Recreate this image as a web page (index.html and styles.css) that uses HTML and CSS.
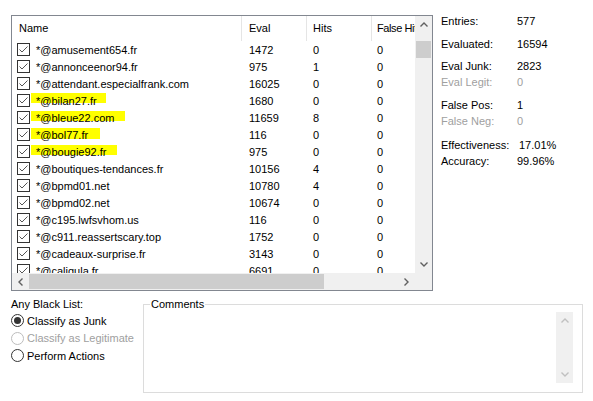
FILE: index.html
```html
<!DOCTYPE html>
<html>
<head>
<meta charset="utf-8">
<link rel="stylesheet" href="styles.css">
</head>
<body>
<div class="dialog">
  <div class="top">
    <div class="listview">
      <div class="lv-main">
        <div class="lv-content">
          <div class="lv-header">
            <div class="hcell c-name">Name</div>
            <div class="hcell c-eval">Eval</div>
            <div class="hcell c-hits">Hits</div>
            <div class="hcell c-false h-tight">False Hits</div>
          </div>
          <div class="lv-rows">
            <div class="row"><div class="cell c-name"><svg class="chk" viewBox="0 0 13 13"><rect x="0.5" y="0.5" width="12" height="12"/><polyline points="2.5,6.5 5,9 10.5,3.5"/></svg><span class="txt">*@amusement654.fr</span></div><div class="cell c-eval">1472</div><div class="cell c-hits">0</div><div class="cell c-false">0</div></div>
            <div class="row"><div class="cell c-name"><svg class="chk" viewBox="0 0 13 13"><rect x="0.5" y="0.5" width="12" height="12"/><polyline points="2.5,6.5 5,9 10.5,3.5"/></svg><span class="txt">*@annonceenor94.fr</span></div><div class="cell c-eval">975</div><div class="cell c-hits">1</div><div class="cell c-false">0</div></div>
            <div class="row"><div class="cell c-name"><svg class="chk" viewBox="0 0 13 13"><rect x="0.5" y="0.5" width="12" height="12"/><polyline points="2.5,6.5 5,9 10.5,3.5"/></svg><span class="txt">*@attendant.especialfrank.com</span></div><div class="cell c-eval">16025</div><div class="cell c-hits">0</div><div class="cell c-false">0</div></div>
            <div class="row"><span class="hl hl-1"></span><div class="cell c-name"><svg class="chk" viewBox="0 0 13 13"><rect x="0.5" y="0.5" width="12" height="12"/><polyline points="2.5,6.5 5,9 10.5,3.5"/></svg><span class="txt">*@bilan27.fr</span></div><div class="cell c-eval">1680</div><div class="cell c-hits">0</div><div class="cell c-false">0</div></div>
            <div class="row"><span class="hl hl-2"></span><div class="cell c-name"><svg class="chk" viewBox="0 0 13 13"><rect x="0.5" y="0.5" width="12" height="12"/><polyline points="2.5,6.5 5,9 10.5,3.5"/></svg><span class="txt">*@bleue22.com</span></div><div class="cell c-eval">11659</div><div class="cell c-hits">8</div><div class="cell c-false">0</div></div>
            <div class="row"><span class="hl hl-3"></span><div class="cell c-name"><svg class="chk" viewBox="0 0 13 13"><rect x="0.5" y="0.5" width="12" height="12"/><polyline points="2.5,6.5 5,9 10.5,3.5"/></svg><span class="txt">*@bol77.fr</span></div><div class="cell c-eval">116</div><div class="cell c-hits">0</div><div class="cell c-false">0</div></div>
            <div class="row"><span class="hl hl-4"></span><div class="cell c-name"><svg class="chk" viewBox="0 0 13 13"><rect x="0.5" y="0.5" width="12" height="12"/><polyline points="2.5,6.5 5,9 10.5,3.5"/></svg><span class="txt">*@bougie92.fr</span></div><div class="cell c-eval">975</div><div class="cell c-hits">0</div><div class="cell c-false">0</div></div>
            <div class="row"><div class="cell c-name"><svg class="chk" viewBox="0 0 13 13"><rect x="0.5" y="0.5" width="12" height="12"/><polyline points="2.5,6.5 5,9 10.5,3.5"/></svg><span class="txt">*@boutiques-tendances.fr</span></div><div class="cell c-eval">10156</div><div class="cell c-hits">4</div><div class="cell c-false">0</div></div>
            <div class="row"><div class="cell c-name"><svg class="chk" viewBox="0 0 13 13"><rect x="0.5" y="0.5" width="12" height="12"/><polyline points="2.5,6.5 5,9 10.5,3.5"/></svg><span class="txt">*@bpmd01.net</span></div><div class="cell c-eval">10780</div><div class="cell c-hits">4</div><div class="cell c-false">0</div></div>
            <div class="row"><div class="cell c-name"><svg class="chk" viewBox="0 0 13 13"><rect x="0.5" y="0.5" width="12" height="12"/><polyline points="2.5,6.5 5,9 10.5,3.5"/></svg><span class="txt">*@bpmd02.net</span></div><div class="cell c-eval">10674</div><div class="cell c-hits">0</div><div class="cell c-false">0</div></div>
            <div class="row"><div class="cell c-name"><svg class="chk" viewBox="0 0 13 13"><rect x="0.5" y="0.5" width="12" height="12"/><polyline points="2.5,6.5 5,9 10.5,3.5"/></svg><span class="txt">*@c195.lwfsvhom.us</span></div><div class="cell c-eval">116</div><div class="cell c-hits">0</div><div class="cell c-false">0</div></div>
            <div class="row"><div class="cell c-name"><svg class="chk" viewBox="0 0 13 13"><rect x="0.5" y="0.5" width="12" height="12"/><polyline points="2.5,6.5 5,9 10.5,3.5"/></svg><span class="txt">*@c911.reassertscary.top</span></div><div class="cell c-eval">1752</div><div class="cell c-hits">0</div><div class="cell c-false">0</div></div>
            <div class="row"><div class="cell c-name"><svg class="chk" viewBox="0 0 13 13"><rect x="0.5" y="0.5" width="12" height="12"/><polyline points="2.5,6.5 5,9 10.5,3.5"/></svg><span class="txt">*@cadeaux-surprise.fr</span></div><div class="cell c-eval">3143</div><div class="cell c-hits">0</div><div class="cell c-false">0</div></div>
            <div class="row"><div class="cell c-name"><svg class="chk" viewBox="0 0 13 13"><rect x="0.5" y="0.5" width="12" height="12"/><polyline points="2.5,6.5 5,9 10.5,3.5"/></svg><span class="txt">*@caligula.fr</span></div><div class="cell c-eval">6691</div><div class="cell c-hits">0</div><div class="cell c-false">0</div></div>
          </div>
        </div>
        <div class="vscroll">
          <div class="sbtn"><svg class="arr" viewBox="0 0 8 5"><polyline points="0.5,4.5 4,1 7.5,4.5"/></svg></div>
          <div class="vtrack"><div class="vthumb"></div></div>
          <div class="sbtn"><svg class="arr" viewBox="0 0 8 5"><polyline points="0.5,0.5 4,4 7.5,0.5"/></svg></div>
        </div>
      </div>
      <div class="hscroll">
        <div class="sbtn"><svg class="arr-h" viewBox="0 0 5 8"><polyline points="4.5,0.5 1,4 4.5,7.5"/></svg></div>
        <div class="htrack"><div class="hthumb"></div></div>
        <div class="sbtn"><svg class="arr-h" viewBox="0 0 5 8"><polyline points="0.5,0.5 4,4 0.5,7.5"/></svg></div>
        <div class="corner"></div>
      </div>
    </div>
    <div class="stats">
      <div class="sgroup">
        <div class="srow"><span class="slabel">Entries:</span><span class="sval">577</span></div>
      </div>
      <div class="sgroup">
        <div class="srow"><span class="slabel">Evaluated:</span><span class="sval">16594</span></div>
      </div>
      <div class="sgroup g-tight">
        <div class="srow"><span class="slabel">Eval Junk:</span><span class="sval">2823</span></div>
        <div class="srow dim"><span class="slabel">Eval Legit:</span><span class="sval">0</span></div>
      </div>
      <div class="sgroup">
        <div class="srow"><span class="slabel">False Pos:</span><span class="sval">1</span></div>
        <div class="srow dim"><span class="slabel">False Neg:</span><span class="sval">0</span></div>
      </div>
      <div class="sgroup g-wide">
        <div class="srow"><span class="slabel">Effectiveness:</span><span class="sval v-eff">17.01%</span></div>
        <div class="srow"><span class="slabel">Accuracy:</span><span class="sval">99.96%</span></div>
      </div>
    </div>
  </div>
  <div class="bottom">
    <div class="options">
      <div class="opt-title">Any Black List:</div>
      <label class="radio"><svg class="rad" viewBox="0 0 13 13"><circle cx="6.5" cy="6.5" r="6"/><circle class="dot" cx="6.5" cy="6.5" r="3.5"/></svg>Classify as Junk</label>
      <label class="radio disabled"><svg class="rad" viewBox="0 0 13 13"><circle cx="6.5" cy="6.5" r="6"/></svg>Classify as Legitimate</label>
      <label class="radio"><svg class="rad" viewBox="0 0 13 13"><circle cx="6.5" cy="6.5" r="6"/></svg>Perform Actions</label>
    </div>
    <fieldset class="comments">
      <legend>Comments</legend>
      <div class="comments-body">
        <div class="cscroll">
          <svg class="arr" viewBox="0 0 8 5"><polyline points="0.5,4.5 4,1 7.5,4.5"/></svg>
          <svg class="arr" viewBox="0 0 8 5"><polyline points="0.5,0.5 4,4 7.5,0.5"/></svg>
        </div>
      </div>
    </fieldset>
  </div>
</div>
</body>
</html>
```

FILE: styles.css
```css
* { box-sizing: border-box; }
html, body { margin: 0; padding: 0; background: #fff; }
body {
  width: 593px;
  height: 401px;
  overflow: hidden;
  font-family: "Liberation Sans", Arial, sans-serif;
  font-size: 11px;
  color: #000;
}
.dialog { padding: 15px 0 0 11px; }
.top { display: flex; align-items: flex-start; }

/* list view */
.listview {
  width: 422px;
  height: 276px;
  border: 1px solid #828790;
  display: flex;
  flex-direction: column;
  flex: none;
}
.lv-main { display: flex; height: 257px; flex: none; }
.lv-content { width: 403px; overflow: hidden; flex: none; }
.lv-header { display: flex; height: 25px; }
.hcell {
  flex: none;
  height: 25px;
  line-height: 25px;
  border-right: 1px solid #e5e5e5;
  white-space: nowrap;
  overflow: hidden;
}
.h-tight { letter-spacing: -0.4px; }
.c-name { width: 230px; padding-left: 7px; }
.c-eval { width: 65px; padding-left: 7px; }
.c-hits { width: 65px; padding-left: 6px; }
.c-false { width: 80px; padding-left: 5px; }
.row { display: flex; height: 17px; line-height: 18px; position: relative; }
.cell { flex: none; white-space: nowrap; position: relative; z-index: 1; }
.row .c-name { padding-left: 5px; display: flex; align-items: center; }
.chk { width: 13px; height: 13px; margin-right: 6px; flex: none; }
.chk rect { fill: #fff; stroke: #333; stroke-width: 1; }
.chk polyline { fill: none; stroke: #555; stroke-width: 1; }
.hl { position: absolute; background: #ffff00; z-index: 0; left: 19px; }
.hl-1 { top: 1px; height: 10px; width: 75px; }
.hl-2 { top: 2px; height: 10px; width: 94px; }
.hl-3 { top: 2px; height: 11px; width: 69px; }
.hl-4 { top: 2px; height: 10px; width: 86px; }

/* scrollbars */
.vscroll {
  width: 17px;
  background: #f0f0f0;
  display: flex;
  flex-direction: column;
  flex: none;
}
.sbtn { width: 17px; height: 17px; flex: none; display: flex; align-items: center; justify-content: center; }
.arr { width: 8px; height: 5px; }
.arr-h { width: 5px; height: 8px; }
.arr polyline, .arr-h polyline { fill: none; stroke: #606060; stroke-width: 1.4; }
.vtrack { flex: 1; padding: 8px 1px 0; }
.vthumb { height: 17px; background: #cdcdcd; }
.hscroll { height: 17px; display: flex; background: #f0f0f0; flex: none; }
.htrack { flex: 1; padding: 1px 0; }
.hthumb { width: 295px; height: 15px; background: #cdcdcd; }
.corner { width: 17px; flex: none; }

/* stats */
.stats { margin: -2px 0 0 8px; }
.sgroup { margin-top: 7px; }
.sgroup:first-child { margin-top: 0; }
.g-tight { margin-top: 6px; }
.g-wide { margin-top: 8px; }
.srow { display: flex; height: 16px; line-height: 16px; white-space: nowrap; }
.slabel { width: 76px; flex: none; }
.v-eff { margin-left: 2px; }
.dim { color: #a0a0a0; }

/* bottom */
.bottom { display: flex; margin-top: 5px; }
.options { width: 132px; flex: none; }
.opt-title { height: 16px; line-height: 16px; }
.radio { display: flex; align-items: center; height: 17.5px; white-space: nowrap; }
.rad { width: 13px; height: 13px; margin-right: 3px; flex: none; }
.rad circle { fill: #fff; stroke: #333; stroke-width: 1; }
.rad circle.dot { fill: #333; stroke: none; }
.radio.disabled { color: #a0a0a0; }
.radio.disabled .rad circle { stroke: #bcbcbc; }

.comments {
  margin: 0;
  padding: 0;
  min-width: 0;
  width: 440px;
  border: 1px solid #dcdcdc;
}
.comments legend {
  margin-left: 6px;
  padding: 0 1px;
  line-height: 16px;
  font-size: 11px;
}
.comments-body { display: flex; justify-content: flex-end; padding: 0 9px 9px 8px; }
.cscroll {
  width: 17px;
  height: 71px;
  background: #f0f0f0;
  display: flex;
  flex-direction: column;
  justify-content: space-between;
  align-items: center;
  padding: 6px 0;
}
.cscroll .arr polyline { stroke: #c0c0c0; }
```
